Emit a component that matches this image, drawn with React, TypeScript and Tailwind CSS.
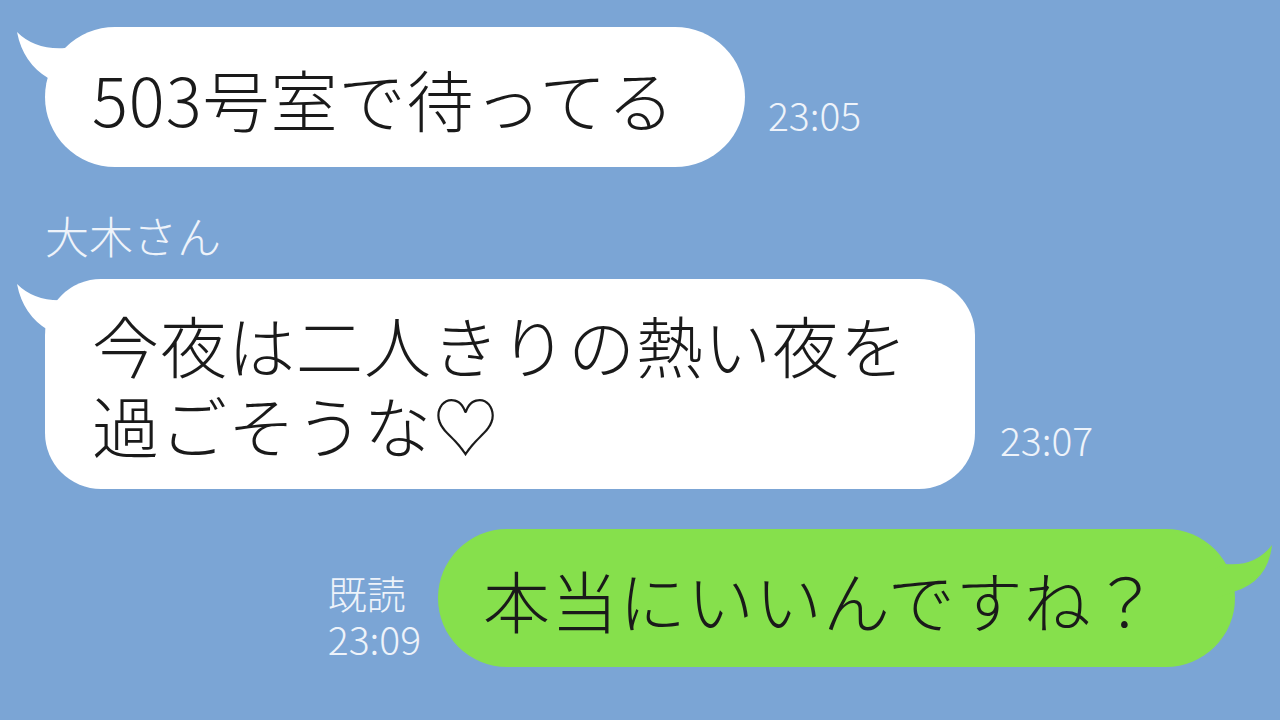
import React from "react";

function LeftTail() {
  return (
    <svg
      className="absolute -left-[30px] top-0"
      width="80"
      height="70"
      viewBox="0 0 80 70"
    >
      <path d="M2 5 Q20 23 50 21 L62 64 L33 64 L33 51 Q8 36 2 5 Z" fill="#ffffff" />
    </svg>
  );
}

function RightTail() {
  return (
    <svg
      className="absolute -right-[50px] top-0"
      width="90"
      height="100"
      viewBox="0 0 90 100"
    >
      <path d="M30 35 Q60 38 77 16 Q73 53 38 63 L20 70 L20 40 Z" fill="#86e04c" />
    </svg>
  );
}

function App() {
  return (
    <div
      className="w-[1280px] h-[720px] overflow-hidden bg-[#7ba5d5] text-[#1a1a1a] font-light flex flex-col"
      style={{ fontFamily: '"Noto Sans CJK JP", "Noto Sans", sans-serif' }}
    >
      {/* first incoming */}
      <div className="flex items-end ml-[45px] mt-[27px]">
        <div className="relative w-[700px] h-[140px] rounded-[70px] bg-white flex items-center pl-[47px]">
          <LeftTail />
          <span className="relative text-[67px] leading-none tracking-[1px]">503号室で待ってる</span>
        </div>
        <div className="ml-[23px] mb-[33px] text-[39px] leading-none text-[#eef3fa]">23:05</div>
      </div>

      <div className="ml-[45px] mt-[46px] text-[44px] leading-none text-[#eef3fa]">大木さん</div>

      {/* second incoming */}
      <div className="flex items-end ml-[45px] mt-[22px]">
        <div className="relative w-[930px] h-[210px] rounded-[56px] bg-white flex items-center pl-[47px]">
          <LeftTail />
          <p className="relative text-[67px] leading-[80px] tracking-[1px]">
            今夜は二人きりの熱い夜を
            <br />
            過ごそうな♡
          </p>
        </div>
        <div className="ml-[25px] mb-[30px] text-[39px] leading-none text-[#eef3fa]">23:07</div>
      </div>

      {/* outgoing */}
      <div className="flex items-end justify-end mr-[45px] mt-[40px]">
        <div className="mr-[17px] mb-[6px] text-[39px] leading-[46px] text-[#eef3fa]">
          既読
          <br />
          23:09
        </div>
        <div className="relative w-[797px] h-[138px] rounded-[69px] bg-[#86e04c] flex items-center pl-[45px]">
          <RightTail />
          <span className="relative text-[67px] leading-none tracking-[1px]">本当にいいんですね？</span>
        </div>
      </div>
    </div>
  );
}

export default App;
